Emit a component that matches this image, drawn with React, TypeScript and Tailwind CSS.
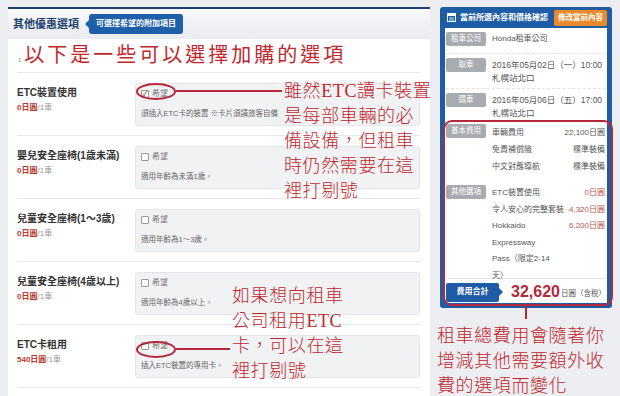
const rows = [
  { name: 'ETC裝置使用', price: '0日圓', note: '須插入ETC卡的裝置 ※卡片須請旅客自備', checked: true },
  { name: '嬰兒安全座椅(1歲未滿)', price: '0日圓', note: '適用年齡為未滿1歲。', checked: false },
  { name: '兒童安全座椅(1～3歲)', price: '0日圓', note: '適用年齡為1～3歲。', checked: false },
  { name: '兒童安全座椅(4歲以上)', price: '0日圓', note: '適用年齡為4歲以上。', checked: false },
  { name: 'ETC卡租用', price: '540日圓', note: '插入ETC裝置的專用卡。', checked: false },
];

function Tag({ children }: { children: React.ReactNode }) {
  return (
    <span className="w-[40px] h-[14px] shrink-0 rounded-[2px] bg-[#a8abaf] text-white text-[7.5px] leading-[14px] text-center">
      {children}
    </span>
  );
}

function Check({ checked }: { checked: boolean }) {
  return (
    <span className="w-[8px] h-[8px] border border-[#9a9a9a] bg-white rounded-[1px] flex items-center justify-center text-[7px] leading-none text-[#333]">
      {checked ? '✓' : ''}
    </span>
  );
}

export default function App() {
  const cjk = "font-['Liberation_Sans','Noto_Sans_CJK_TC',sans-serif]";
  const note = "font-['Liberation_Serif','Noto_Sans_CJK_TC',serif] font-light whitespace-nowrap text-[18px] leading-[25px] tracking-[0.6px] text-[#c0272d]";
  return (
    <div className={`w-[620px] h-[396px] overflow-hidden bg-[#eceef2] flex gap-[10px] pl-[8px] pt-[7px] relative ${cjk}`}>
      {/* Left panel */}
      <div className="w-[422px] h-[400px] bg-white border-t-2 border-[#1d3f6e] shrink-0">
        <div className="h-[30px] bg-gradient-to-b from-[#f8f9fb] to-[#e8ebef] flex items-center pl-[5px]">
          <span className="text-[11px] font-bold text-[#1d3f6e]">其他優惠選項</span>
          <span className="ml-[10px] relative h-[20px] px-[7px] rounded-[3px] bg-[#1f5fa9] text-white text-[8px] font-bold flex items-center">
            <span className="absolute left-[-4px] top-[6px] w-0 h-0 border-y-[4px] border-y-transparent border-r-[4px] border-r-[#1f5fa9]" />
            可選擇希望的附加項目
          </span>
        </div>
        <div className="flex items-end h-[31px] pl-[10px] pb-[3px]">
          <span className="text-[6px] text-[#888] mr-[3px] mb-[2px]">1</span>
          <span className="font-['Liberation_Serif','Noto_Sans_CJK_TC',serif] text-[20px] leading-[24px] tracking-[3px] text-[#c0272d]">
            以下是一些可以選擇加購的選項
          </span>
        </div>
        <div className="mx-[9px] mr-[10px] mt-[2px] border-t border-[#e6e8eb]">
          {rows.map((r) => (
            <div key={r.name} className="h-[63px] border-b border-[#e6e8eb] flex items-start pt-[10px]">
              <div className="w-[118px] pt-[3px]">
                <div className="text-[10px] font-bold text-[#333] leading-[14px]">{r.name}</div>
                <div className="text-[8px] mt-[2px] leading-[12px]">
                  <span className="font-bold text-[#b53a2c]">{r.price}</span>
                  <span className="text-[#999]">/1車</span>
                </div>
              </div>
              <div className="flex-1 h-[43px] bg-[#f1f2f4] border border-[#e4e6e9] rounded-[3px] px-[5px]">
                <div className="h-[19px] flex items-center gap-[3px] text-[8px] text-[#777]">
                  <Check checked={r.checked} />
                  <span>希望</span>
                </div>
                <div className="h-[22px] flex items-center text-[7.5px] text-[#666]">{r.note}</div>
              </div>
            </div>
          ))}
        </div>
      </div>

      {/* Right panel */}
      <div className="w-[172px] shrink-0 flex flex-col">
        <div className="h-[301px] bg-[#1f5ca6] rounded-[3px] px-[5px] pb-[5px] flex flex-col">
          <div className="h-[24px] flex items-center">
            <svg width="9" height="9" viewBox="0 0 9 9" className="ml-[2px] mr-[4px]">
              <rect x="0.5" y="0.5" width="8" height="8" fill="none" stroke="#fff" />
              <rect x="0.5" y="0.5" width="8" height="2.5" fill="#fff" />
              <path d="M2 5h5M2 7h5" stroke="#fff" strokeWidth="0.8" />
            </svg>
            <span className="text-[8px] font-bold text-white whitespace-nowrap">當前所選內容和價格確認</span>
            <span className="ml-auto h-[16px] px-[4px] bg-[#e98a2c] rounded-[2px] text-[7.5px] font-bold text-white flex items-center whitespace-nowrap">
              修改當前內容
            </span>
          </div>
          <div className="flex-1 bg-white px-[1px] pt-[4px] text-[8px] text-[#555] whitespace-nowrap">
            <div className="flex gap-[6px] h-[22px] border-b border-dashed border-[#e2e2e2]">
              <Tag>租車公司</Tag>
              <span className="leading-[14px]">Honda租車公司</span>
            </div>
            <div className="flex gap-[6px] pt-[4px] h-[35px] border-b border-dashed border-[#e2e2e2]">
              <Tag>取車</Tag>
              <div className="leading-[13px] pt-[1px] text-[8.5px]">
                <div>2016年05月02日（一）10:00</div>
                <div>札幌站北口</div>
              </div>
            </div>
            <div className="flex gap-[6px] pt-[4px] h-[31px]">
              <Tag>還車</Tag>
              <div className="leading-[13px] pt-[1px] text-[8.5px]">
                <div>2016年05月06日（五）17:00</div>
                <div>札幌站北口</div>
              </div>
            </div>
            <div className="flex gap-[6px] pt-[4px] h-[61px]">
              <Tag>基本費用</Tag>
              <div className="flex-1 leading-[17px] pr-[1px]">
                <div className="flex justify-between"><span>車輛費用</span><span>22,100日圓</span></div>
                <div className="flex justify-between"><span>免責補償險</span><span>標準裝備</span></div>
                <div className="flex justify-between"><span>中文對應導航</span><span>標準裝備</span></div>
              </div>
            </div>
            <div className="flex gap-[6px] pt-[4px] h-[98px] border-b border-[#e6e6e6]">
              <Tag>其他選項</Tag>
              <div className="flex-1 leading-[16.5px] pr-[1px]">
                <div className="flex justify-between"><span>ETC裝置使用</span><span className="text-[#b8584a]">0日圓</span></div>
                <div className="flex justify-between"><span>令人安心的完整套裝</span><span className="text-[#b8584a]">4,320日圓</span></div>
                <div className="flex justify-between">
                  <span>Hokkaido<br />Expressway<br />Pass（限定2-14<br />天）</span>
                  <span className="text-[#b8584a]">6,200日圓</span>
                </div>
              </div>
            </div>
            <div className="flex items-center h-[24px] pt-[2px]">
              <span className="relative h-[19px] w-[55px] bg-[#1f5ca6] rounded-[2px] text-white text-[8px] font-bold flex items-center justify-center">
                費用合計
                <span className="absolute right-[-4px] top-[5px] w-0 h-0 border-y-[4px] border-y-transparent border-l-[4px] border-l-[#1f5ca6]" />
              </span>
              <span className="ml-[12px] text-[16px] font-bold text-[#b5283a] leading-none">32,620</span>
              <span className="text-[7.5px] text-[#555] ml-[1px] mt-[3px]">日圓（含稅）</span>
            </div>
          </div>
        </div>
        <div className={`mt-[16px] -ml-[3px] ${note}`}>
          <div>租車總費用會隨著你</div>
          <div>增減其他需要額外收</div>
          <div>費的選項而變化</div>
        </div>
      </div>

      {/* Annotations over content */}
      <div className="absolute left-[443px] top-[120px] w-[170px] h-[186px] border-2 border-[#b5283a] rounded-[9px]" />
      <div className="absolute left-[525px] top-[305px] w-[2px] h-[14px] bg-[#b5283a]" />

      <div className="absolute left-[136px] top-[83px] w-[40px] h-[17px] border-2 border-[#b5283a] rounded-[50%]" />
      <div className="absolute left-[176px] top-[90px] w-[106px] h-[2px] bg-[#b5283a]" />
      <div className={`absolute left-[284px] top-[79px] ${note}`}>
        <div>雖然ETC讀卡裝置</div>
        <div>是每部車輛的必</div>
        <div>備設備，但租車</div>
        <div>時仍然需要在這</div>
        <div>裡打剔號</div>
      </div>

      <div className="absolute left-[136px] top-[341px] w-[40px] h-[17px] border-2 border-[#b5283a] rounded-[50%]" />
      <div className="absolute left-[176px] top-[348px] w-[54px] h-[2px] bg-[#b5283a]" />
      <div className={`absolute left-[232px] top-[284px] ${note}`}>
        <div>如果想向租車</div>
        <div>公司租用ETC</div>
        <div>卡，可以在這</div>
        <div>裡打剔號</div>
      </div>
    </div>
  );
}
